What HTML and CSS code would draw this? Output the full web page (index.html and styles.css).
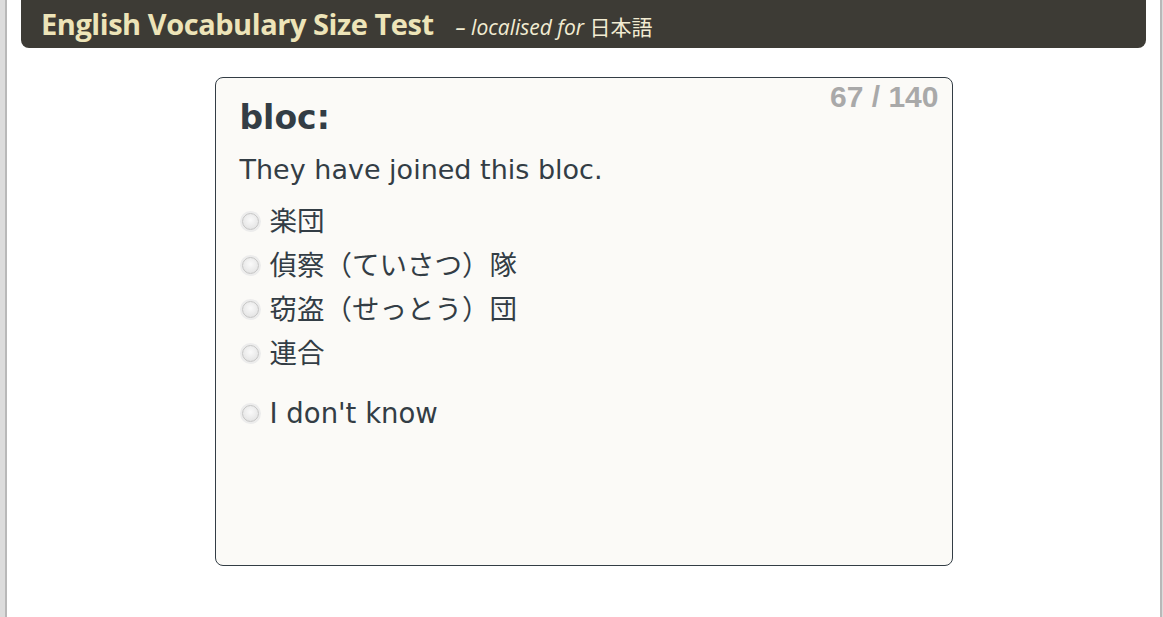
FILE: index.html
```html
<!DOCTYPE html>
<html lang="ja">
<head>
    <meta charset="UTF-8">
    <title>English Vocabulary Size Test</title>
    <link rel="stylesheet" href="styles.css">
</head>
<body>
<div id="page">
    <div class="header">
        <h1>English Vocabulary Size Test</h1>
        <span class="subtitle"><em>– localised for</em> 日本語</span>
    </div>

    <div class="question-card">
        <div class="counter">67 / 140</div>
        <h2>bloc:</h2>
        <p class="example">They have joined this bloc.</p>

        <ul class="choices">
            <li><label><input type="radio" name="answer"> 楽団</label></li>
            <li><label><input type="radio" name="answer"> 偵察（ていさつ）隊</label></li>
            <li><label><input type="radio" name="answer"> 窃盗（せっとう）団</label></li>
            <li><label><input type="radio" name="answer"> 連合</label></li>
            <li class="dont-know"><label><input type="radio" name="answer"> I don't know</label></li>
        </ul>
    </div>
</div>
</body>
</html>
```

FILE: styles.css
```css
html, body {
    margin: 0;
    height: 100%;
}

body {
    font-family: 'DejaVu Sans', 'Noto Sans CJK JP', sans-serif;
    background-color: #dcdcdc;
    color: #333d45;
    padding: 0 1px 0 5px;
    overflow: hidden;
}

#page {
    background: #ffffff;
    border-left: 2px solid #b8b8b8;
    border-right: 2px solid #b8b8b8;
    min-height: 100%;
    padding: 0 14px;
}

.header {
    display: flex;
    align-items: baseline;
    gap: 22px;
    height: 48px;
    padding: 0 20px;
    background: #3d3b35;
    border-radius: 0 0 8px 8px;
    color: #ede4b8;
}

.header h1 {
    margin: 0;
    font-family: 'Open Sans', 'DejaVu Sans', sans-serif;
    font-size: 29px;
    font-weight: bold;
    line-height: 48px;
    letter-spacing: -0.45px;
}

.subtitle {
    font-family: 'Open Sans', 'Noto Sans CJK JP', sans-serif;
    font-size: 21px;
    color: #f2ecd2;
}

.question-card {
    position: relative;
    width: 687px;
    min-height: 439px;
    margin: 29px auto 0;
    padding: 18px 25px 30px 24px;
    background: #fbfaf7;
    border: 1px solid #333d45;
    border-radius: 8px;
}

.counter {
    position: absolute;
    top: 2px;
    right: 13px;
    font-family: 'Liberation Sans', Arial, sans-serif;
    font-size: 30px;
    font-weight: bold;
    color: #a9a9a9;
}

.question-card h2 {
    margin: 0;
    font-size: 33px;
    line-height: 44px;
}

.example {
    margin: 10px 0 9px;
    font-size: 27px;
    line-height: 40px;
}

.choices {
    list-style: none;
    margin: 0;
    padding: 0;
}

.choices li {
    height: 44px;
    font-size: 27.5px;
    line-height: 44px;
}

.choices li.dont-know {
    margin-top: 16px;
}

.choices label {
    display: flex;
    align-items: center;
    gap: 11px;
}

.choices input {
    appearance: none;
    -webkit-appearance: none;
    width: 17px;
    height: 17px;
    margin: 0 0 0 2px;
    border: 1px solid #c4c4c4;
    border-radius: 50%;
    background: radial-gradient(circle at 50% 40%, #fafafa 0%, #e8e8e8 65%, #d6d6d6 100%);
    box-shadow: 0 0 0 2px #ececec;
}
```
